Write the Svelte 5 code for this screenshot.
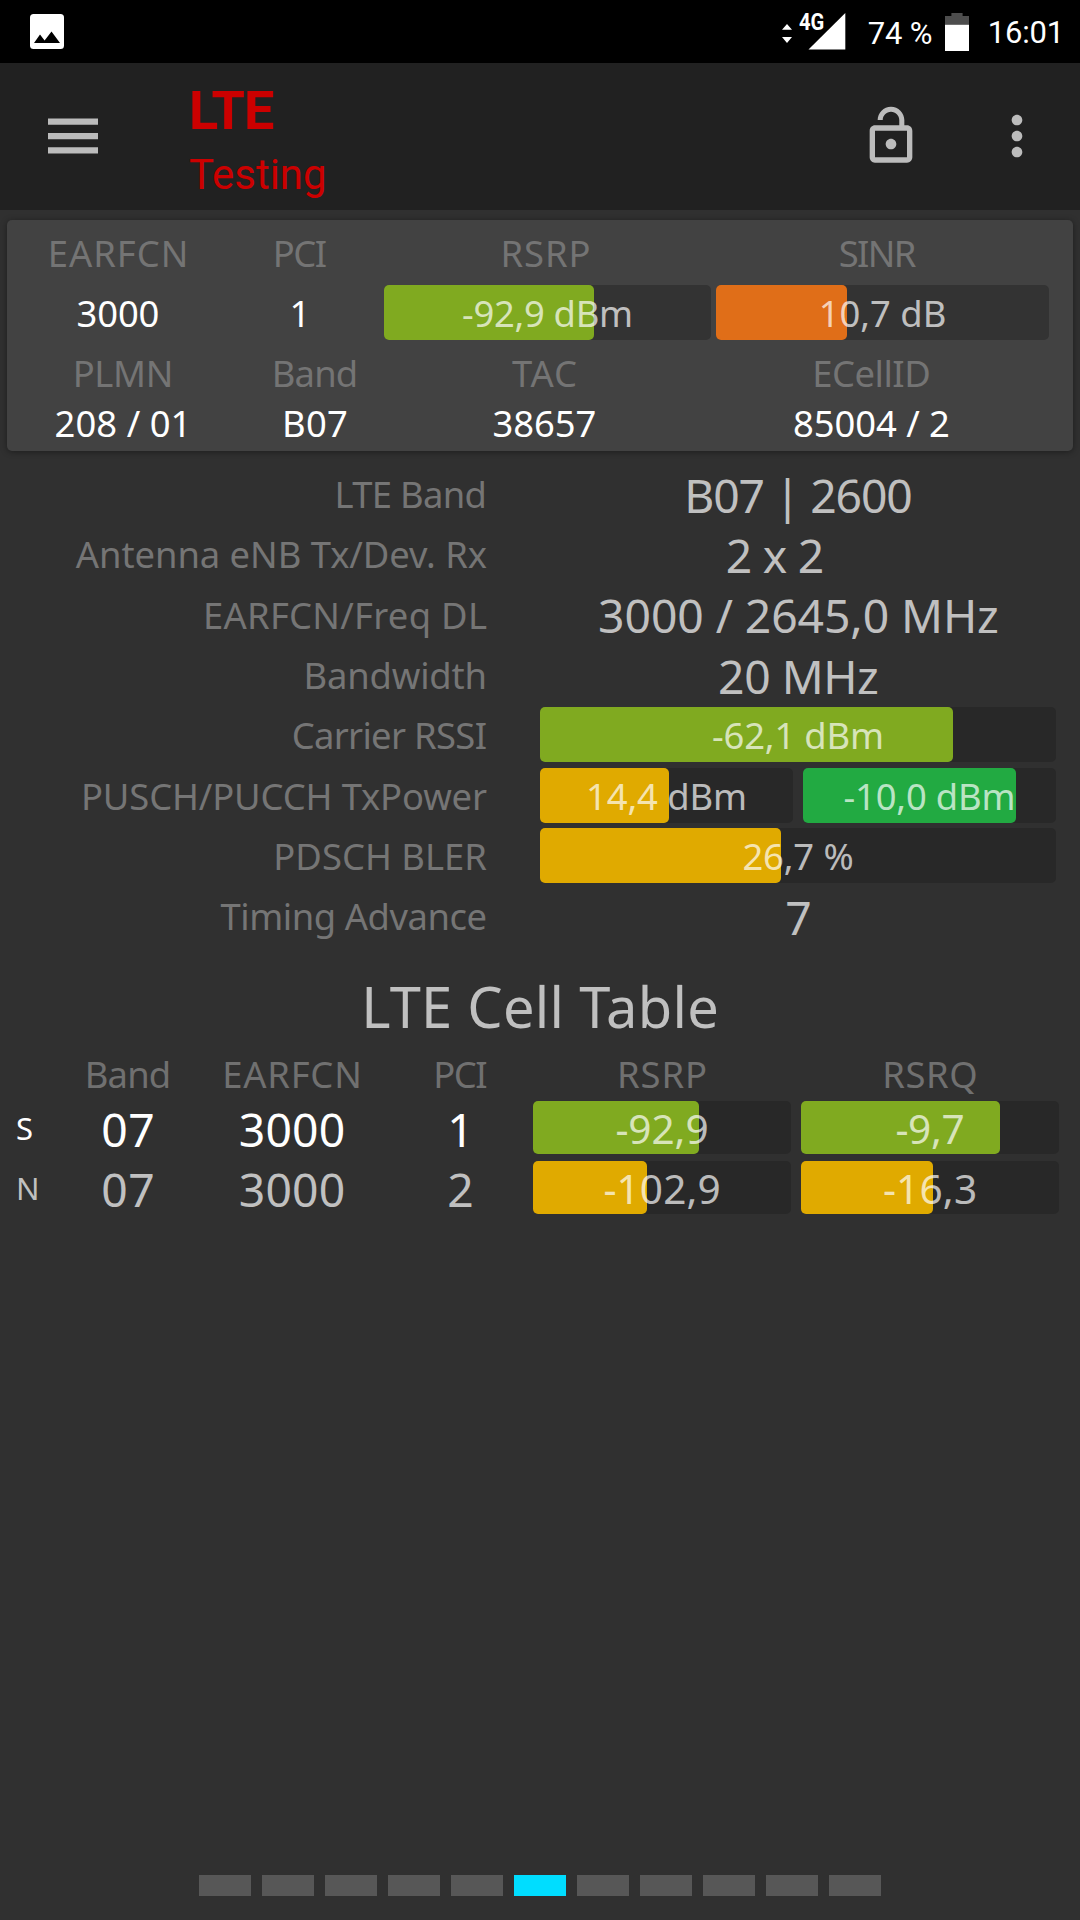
<script lang="ts">
	type Bar = { text: string; ink: number; fill: number; color: string };

	const green = '#80aa20';
	const amber = '#e0aa00';
	const orange = '#e06e18';
	const emerald = '#22aa42';

	const details = [
		{ label: 'LTE Band', labelInk: 147, value: 'B07 | 2600', ink: 223 },
		{ label: 'Antenna eNB Tx/Dev. Rx', labelInk: 411, value: '2 x 2', ink: 95, shift: true },
		{ label: 'EARFCN/Freq DL', labelInk: 281, value: '3000 / 2645,0 MHz', ink: 397 },
		{ label: 'Bandwidth', labelInk: 178, value: '20 MHz', ink: 157 },
		{ label: 'Carrier RSSI', labelInk: 192, bars: [{ text: '-62,1 dBm', ink: 169, fill: 80, color: green }] },
		{
			label: 'PUSCH/PUCCH TxPower',
			labelInk: 403,
			bars: [
				{ text: '14,4 dBm', ink: 156, fill: 51, color: amber },
				{ text: '-10,0 dBm', ink: 169, fill: 84.2, color: emerald }
			]
		},
		{ label: 'PDSCH BLER', labelInk: 211, bars: [{ text: '26,7 %', ink: 109, fill: 46.7, color: amber }] },
		{ label: 'Timing Advance', labelInk: 265, value: '7', ink: 21 }
	];

	const cells = [
		{
			type: 'S',
			band: '07',
			earfcn: '3000',
			pci: '1',
			bars: [
				{ text: '-92,9', ink: 91, fill: 64.2, color: green },
				{ text: '-9,7', ink: 67, fill: 77.3, color: green }
			]
		},
		{
			type: 'N',
			band: '07',
			earfcn: '3000',
			pci: '2',
			bars: [
				{ text: '-102,9', ink: 115, fill: 44.3, color: amber },
				{ text: '-16,3', ink: 91, fill: 51, color: amber }
			]
		}
	];

	const pages = Array.from({ length: 11 }, (_, i) => i);
	const activePage = 5;

	// spread the letters so the drawn glyphs span the given width
	const fit = (node: HTMLElement, width: number) => {
		const text = node.textContent.trim();
		if (text.length < 2) return;
		const style = getComputedStyle(node);
		const ctx = document.createElement('canvas').getContext('2d');
		ctx.font = `${style.fontWeight} ${style.fontSize} ${style.fontFamily}`;
		const m = ctx.measureText(text);
		const ink = m.actualBoundingBoxLeft + m.actualBoundingBoxRight;
		const spacing = (width - ink) / (text.length - 1);
		node.style.letterSpacing = `${spacing}px`;
		node.style.marginRight = `${-spacing}px`;
	};
</script>

{#snippet bar(b: Bar)}
	<div class="bar">
		<div class="fill" style="width: {b.fill}%; background-color: {b.color}"></div>
		<span class="bar-text" use:fit={b.ink}>{b.text}</span>
	</div>
{/snippet}

<main>
	<div class="status">
		<svg class="photo" viewBox="0 0 34 35">
			<rect width="34" height="35" rx="3.5" fill="#fff" />
			<path d="M4 29 10 20.5 14.6 26.5 21.5 17.5 30 29z" fill="#000" />
		</svg>
		<div class="signal">
			<svg viewBox="0 0 64 38">
				<path d="M0 16.8 5 11l5 5.8zM0 24h10l-5 6z" fill="#fff" />
				<path d="M26.5 36.5H63.3V0z" fill="#fff" />
			</svg>
			<span class="net">4G</span>
		</div>
		<span class="percent" use:fit={63}>74 %</span>
		<svg class="battery" viewBox="0 0 24 38">
			<path d="M6.4 0h11.2v3H24v9H0V3h6.4z" fill="#4d4d4d" />
			<path d="M0 11.8h24V38H0z" fill="#fff" />
		</svg>
		<span class="clock" use:fit={69}>16:01</span>
	</div>

	<header>
		<svg class="menu" viewBox="0 0 50 36">
			<path d="M0 .5h50v6.3H0zM0 15h50v6.2H0zM0 29.3h50v6.2H0z" fill="#bcbcbc" />
		</svg>
		<div class="titles">
			<h1><span use:fit={82}>LTE</span></h1>
			<h2><span use:fit={134}>Testing</span></h2>
		</div>
		<svg class="icon lock" viewBox="0 0 24 24">
			<path
				fill="#bcbcbc"
				d="M12 17c1.1 0 2-.9 2-2s-.9-2-2-2-2 .9-2 2 .9 2 2 2zm6-9h-1V6c0-2.76-2.24-5-5-5S7 3.24 7 6h1.9c0-1.71 1.39-3.1 3.1-3.1 1.71 0 3.1 1.39 3.1 3.1v2H6c-1.1 0-2 .9-2 2v10c0 1.1.9 2 2 2h12c1.1 0 2-.9 2-2V10c0-1.1-.9-2-2-2zm0 12H6V10h12v10z"
			/>
		</svg>
		<svg class="icon more" viewBox="0 0 24 24">
			<path
				fill="#bcbcbc"
				d="M12 8c1.1 0 2-.9 2-2s-.9-2-2-2-2 .9-2 2 .9 2 2 2zm0 2c-1.1 0-2 .9-2 2s.9 2 2 2 2-.9 2-2-.9-2-2-2zm0 6c-1.1 0-2 .9-2 2s.9 2 2 2 2-.9 2-2-.9-2-2-2z"
			/>
		</svg>
	</header>

	<section class="card">
		<div class="serving">
			<span class="label"><span use:fit={135}>EARFCN</span></span>
			<span class="label"><span use:fit={50}>PCI</span></span>
			<span class="label rsrp"><span use:fit={86}>RSRP</span></span>
			<span class="label sinr"><span use:fit={77}>SINR</span></span>
			<span class="value"><span use:fit={81}>3000</span></span>
			<span class="value"><span>1</span></span>
			{@render bar({ text: '-92,9 dBm', ink: 168, fill: 64.3, color: green })}
			{@render bar({ text: '10,7 dB', ink: 123, fill: 39.3, color: orange })}
		</div>
		<div class="identity">
			<span class="label"><span use:fit={95}>PLMN</span></span>
			<span class="label"><span use:fit={81}>Band</span></span>
			<span class="label"><span use:fit={64}>TAC</span></span>
			<span class="label"><span use:fit={114}>ECellID</span></span>
			<span class="value"><span use:fit={128}>208 / 01</span></span>
			<span class="value"><span use:fit={62}>B07</span></span>
			<span class="value"><span use:fit={102}>38657</span></span>
			<span class="value"><span use:fit={154}>85004 / 2</span></span>
		</div>
	</section>

	<section class="details">
		{#each details as d}
			<div class="row">
				<span class="label"><span use:fit={d.labelInk}>{d.label}</span></span>
				<div class="data">
					{#if d.bars}
						{#each d.bars as b}
							{@render bar(b)}
						{/each}
					{:else}
						<span class="value" class:shift={d.shift}><span use:fit={d.ink}>{d.value}</span></span>
					{/if}
				</div>
			</div>
		{/each}
	</section>

	<h3><span use:fit={350}>LTE Cell Table</span></h3>

	<section class="table">
		<div class="cells head">
			<span></span>
			<span class="label"><span use:fit={81}>Band</span></span>
			<span class="label"><span use:fit={134}>EARFCN</span></span>
			<span class="label"><span use:fit={50}>PCI</span></span>
			<span class="label"><span use:fit={86}>RSRP</span></span>
			<span class="label"><span use:fit={91}>RSRQ</span></span>
		</div>
		{#each cells as c}
			<div class="cells" class:active={c.type === 'S'}>
				<span class="type">{c.type}</span>
				<span class="value"><span use:fit={50}>{c.band}</span></span>
				<span class="value"><span use:fit={103}>{c.earfcn}</span></span>
				<span class="value"><span>{c.pci}</span></span>
				{#each c.bars as b}
					{@render bar(b)}
				{/each}
			</div>
		{/each}
	</section>

	<footer>
		{#each pages as p}
			<i class:current={p === activePage}></i>
		{/each}
	</footer>
</main>

<style>
	:global(body) {
		background-color: #303030;
	}

	main {
		width: 1080px;
		height: 1920px;
		display: flex;
		flex-direction: column;
		overflow: hidden;
		background-color: #303030;
		color: #c0c0c0;
		font-family: 'Noto Sans', 'Open Sans', sans-serif;
		font-size: 36.4px;
		white-space: nowrap;
	}

	main span {
		display: inline-block;
	}

	svg {
		display: block;
		flex: none;
	}

	.status {
		height: 63px;
		flex: none;
		display: flex;
		align-items: center;
		background-color: #000;
		color: #fff;
		font-family: Roboto, sans-serif;
		font-size: 31px;
		line-height: 63px;
	}

	.photo {
		width: 34px;
		height: 35px;
		margin-left: 30px;
		margin-right: auto;
	}

	.signal {
		position: relative;
		margin-right: 22px;
	}

	.signal svg {
		width: 64px;
		height: 38px;
	}

	.net {
		position: absolute;
		top: -3px;
		left: 17px;
		font-size: 24px;
		font-weight: 700;
		line-height: 24px;
		transform: scaleX(0.84);
		transform-origin: left;
	}

	.percent {
		padding-top: 3px;
		width: 77px;
	}

	.battery {
		width: 24px;
		height: 38px;
	}

	.clock {
		width: 92px;
		padding-top: 2px;
		padding-left: 19px;
		box-sizing: content-box;
	}

	header {
		height: 147px;
		flex: none;
		display: flex;
		align-items: center;
		background-color: #212121;
		color: #c00;
		font-family: Roboto, sans-serif;
	}

	.menu {
		width: 50px;
		height: 36px;
		margin-left: 48px;
	}

	.menu,
	.icon {
		margin-bottom: 2px;
	}

	.titles {
		margin-left: 91px;
		padding-top: 13px;
		flex: 1;
	}

	h1,
	h2,
	h3 {
		margin: 0;
	}

	h1 {
		font-size: 54px;
		font-weight: 700;
		line-height: 63px;
	}

	h2 {
		font-size: 42px;
		font-weight: 400;
		line-height: 65px;
	}

	.icon {
		width: 64px;
		height: 64px;
	}

	.lock {
		margin-right: 62px;
	}

	.more {
		margin-right: 31px;
	}

	.card {
		--track: #333;
		height: 231px;
		flex: none;
		margin: 10px 7px 0;
		border-radius: 5px;
		background-color: #424242;
		box-shadow: 0 1px 6px rgba(0, 0, 0, 0.4);
	}

	.serving,
	.identity {
		display: grid;
		align-items: center;
		text-align: center;
	}

	.serving {
		grid-template-columns: 222px 142px 13px 327px 5px 333px;
		grid-template-rows: 65px 55px;
	}

	.serving > :nth-child(4n + 3) {
		grid-column: 4;
	}

	.serving > :nth-child(4n + 4) {
		grid-column: 6;
	}

	.serving .rsrp {
		padding-right: 4px;
	}

	.serving .sinr {
		padding-right: 10px;
	}

	.identity {
		grid-template-columns: 232px 152px 307px 347px;
		grid-template-rows: 66px 34px;
	}

	.label {
		color: #707070;
		line-height: 50px;
	}

	.value {
		line-height: 50px;
	}

	.card .value {
		color: #fff;
	}

	.card .label {
		color: #747474;
	}

	.bar {
		position: relative;
		height: 55px;
		flex: 1;
		border-radius: 5px;
		background-color: var(--track, #282828);
		color: rgba(255, 255, 255, 0.7);
		text-align: center;
		line-height: 57px;
	}

	.fill {
		position: absolute;
		top: 0;
		left: 0;
		height: 100%;
		border-radius: 5px;
	}

	.bar-text {
		position: relative;
	}

	.details {
		margin-top: 12.4px;
	}

	.row {
		display: flex;
		align-items: center;
		height: 60.33px;
	}

	.row > .label {
		width: 487px;
		padding-top: 1px;
		color: #757575;
		text-align: right;
	}

	.data {
		display: flex;
		gap: 10px;
		width: 516px;
		margin-left: 53px;
	}

	.data .value {
		flex: 1;
		padding-top: 4px;
		padding-left: 1px;
		font-size: 46.3px;
		text-align: center;
	}

	.data .shift {
		padding-right: 47px;
	}

	h3 {
		height: 81px;
		margin-top: 19.6px;
		font-size: 56px;
		font-weight: 400;
		line-height: 81px;
		text-align: center;
	}

	.cells {
		display: grid;
		grid-template-columns: 60px 136px 192px 145px 258px 258px;
		align-items: center;
		height: 53px;
		margin-bottom: 7px;
		text-align: center;
	}

	.cells > :last-child {
		margin-left: 10px;
		margin-right: -10px;
	}

	.head {
		height: 54.6px;
		margin-bottom: 0;
	}

	.type {
		padding-left: 16px;
		font-size: 31px;
		line-height: 50px;
		text-align: left;
	}

	.cells .value {
		padding-top: 5px;
		font-size: 46.3px;
		line-height: 46px;
	}

	.cells .bar {
		height: 53px;
		font-size: 40.6px;
		line-height: 56px;
	}

	.active .type,
	.active .value {
		color: #fff;
	}

	footer {
		display: flex;
		justify-content: center;
		gap: 10.3px;
		margin-top: auto;
		margin-bottom: 24px;
	}

	footer i {
		width: 52.7px;
		height: 21px;
		background-color: #575757;
	}

	footer .current {
		background-color: #00ddff;
	}
</style>
